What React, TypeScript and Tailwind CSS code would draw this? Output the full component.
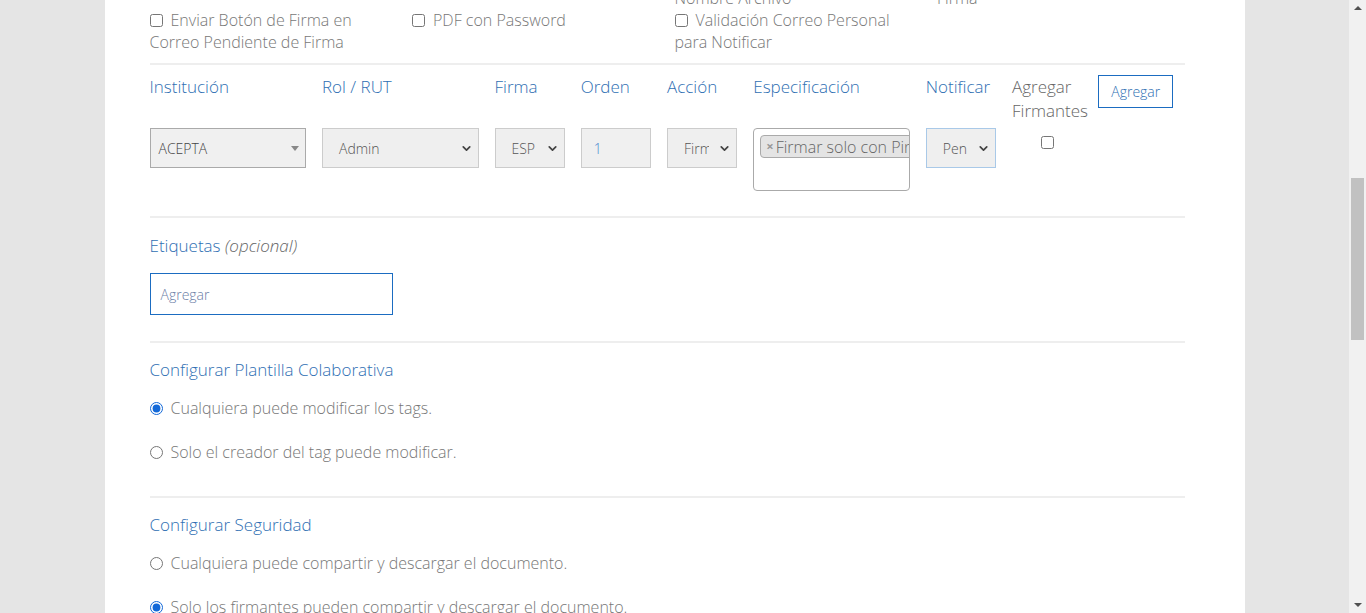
import { ChevronDown } from "lucide-react";

const Select = ({ text, className }: { text: string; className?: string }) => {
  return (
    <div
      className={`flex h-[40px] items-center overflow-hidden border bg-[#efefef] text-[14px] text-[#555] ${className ?? ""}`}
    >
      <span className="mr-[9px] flex-1 overflow-hidden whitespace-nowrap pl-[16px]">{text}</span>
      <ChevronDown size={13} strokeWidth={3.2} className="mr-[5px] shrink-0 text-[#444]" />
    </div>
  );
};

const Radio = ({ label, checked }: { label: string; checked?: boolean }) => {
  return (
    <label className="flex h-[44px] items-center">
      <input
        type="radio"
        defaultChecked={checked}
        className="mr-[8px] h-[13px] w-[13px] accent-[#1268d8]"
      />
      <span>{label}</span>
    </label>
  );
};

const App = () => {
  return (
    <div
      className="flex h-[613px] w-full overflow-hidden bg-[#e5e5e5] text-[16px] font-light text-[#777]"
      style={{ fontFamily: '"Open Sans", "Noto Sans", sans-serif' }}
    >
      <div className="flex flex-1 justify-center">
        <div className="h-full w-[1140px] overflow-hidden bg-white pl-[45px] pr-[60px]">
          {/* checkboxes de opciones */}
          <div className="-mt-[13px] leading-[22px]">
            <div className="grid grid-cols-[repeat(4,262.5px)]">
              <div></div>
              <div></div>
              <div className="pr-[30px]">Nombre Archivo</div>
              <div className="pr-[30px]">Firma</div>
            </div>
            <div className="grid grid-cols-[repeat(4,262.5px)]">
              <label className="pr-[30px]">
                <input type="checkbox" className="mr-[8px] h-[13px] w-[13px] align-[-1px]" />
                Enviar Botón de Firma en Correo Pendiente de Firma
              </label>
              <label className="pr-[30px]">
                <input type="checkbox" className="mr-[8px] h-[13px] w-[13px] align-[-1px]" />
                PDF con Password
              </label>
              <label className="pr-[30px]">
                <input type="checkbox" className="mr-[8px] h-[13px] w-[13px] align-[-1px]" />
                Validación Correo Personal para Notificar
              </label>
              <div></div>
            </div>
          </div>

          <div className="mt-[10px] h-[2px] bg-[#eeeeee]"></div>

          {/* firmantes */}
          <div className="mt-[10px] grid grid-cols-12 text-[17px] leading-[24px] text-[#2f6fb3]">
            <div className="col-span-2 pr-[16px]">Institución</div>
            <div className="col-span-2 pr-[16px]">Rol / RUT</div>
            <div className="col-span-1 pr-[16px]">Firma</div>
            <div className="col-span-1 pr-[16px]">Orden</div>
            <div className="col-span-1 pr-[16px]">Acción</div>
            <div className="col-span-2 pr-[16px]">Especificación</div>
            <div className="col-span-1 whitespace-nowrap pr-[4px]">Notificar</div>
            <div className="col-span-1 pr-[4px] text-[#666]">Agregar Firmantes</div>
            <div className="col-span-1">
              <button className="h-[33px] whitespace-nowrap border border-[#1b6cc1] px-[12px] text-[14px] text-[#2f6fb3]">
                Agregar
              </button>
            </div>
          </div>

          <div className="mt-[5px] grid grid-cols-12 items-start">
            <div className="col-span-2 pr-[16px]">
              <div className="flex h-[40px] items-center border border-[#aaa] bg-[#f0f0f0] text-[14px] text-[#444]">
                <span className="flex-1 pl-[8px]">ACEPTA</span>
                <span className="mr-[6px] h-0 w-0 border-x-[4px] border-t-[5px] border-x-transparent border-t-[#888]"></span>
              </div>
            </div>
            <div className="col-span-2 pr-[16px]">
              <Select text="Admin" className="border-[#cccccc]" />
            </div>
            <div className="col-span-1 pr-[16px]">
              <Select text="ESP" className="border-[#cccccc]" />
            </div>
            <div className="col-span-1 pr-[16px]">
              <div className="flex h-[40px] items-center border border-[#cccccc] bg-[#f0f0f0] pl-[12px] text-[14px] text-[#4a86cf]">
                1
              </div>
            </div>
            <div className="col-span-1 pr-[16px]">
              <Select text="Firmar" className="border-[#cccccc]" />
            </div>
            <div className="col-span-2 pr-[16px]">
              <div className="h-[63px] overflow-hidden rounded-[4px] border border-[#aaa] bg-white pl-[6px] pt-[6px]">
                <div className="flex h-[23px] w-[180px] items-center whitespace-nowrap rounded-[4px] border border-[#aaa] bg-[#e4e4e4] pl-[5px] text-[#666]">
                  <span className="mr-[2px] text-[13px] font-bold text-[#999]">×</span>
                  Firmar solo con Pin
                </div>
              </div>
            </div>
            <div className="col-span-1 pr-[16px]">
              <Select text="Pen" className="border-[#a9c9e8]" />
            </div>
            <div className="col-span-1 flex justify-center pr-[16px] pt-[8px]">
              <input type="checkbox" className="h-[13px] w-[13px]" />
            </div>
            <div className="col-span-1"></div>
          </div>

          <div className="mt-[25px] h-[2px] bg-[#eeeeee]"></div>

          {/* etiquetas */}
          <div className="mt-[16px] text-[17px] leading-[24px] text-[#2f6fb3]">
            Etiquetas <span className="italic text-[#666]">(opcional)</span>
          </div>
          <div className="mt-[15px] flex h-[42px] w-[243px] items-center border border-[#1b6cc1] pl-[10px] text-[14px] text-[#6b7ea6]">
            Agregar
          </div>

          <div className="mt-[26px] h-[2px] bg-[#eeeeee]"></div>

          {/* plantilla colaborativa */}
          <div className="mt-[15px] text-[17px] leading-[24px] text-[#2f6fb3]">Configurar Plantilla Colaborativa</div>
          <div className="mt-[4px]">
            <Radio label="Cualquiera puede modificar los tags." checked />
            <Radio label="Solo el creador del tag puede modificar." />
          </div>

          <div className="mt-[22px] h-[2px] bg-[#eeeeee]"></div>

          {/* seguridad */}
          <div className="mt-[15px] text-[17px] leading-[24px] text-[#2f6fb3]">Configurar Seguridad</div>
          <div className="mt-[4px]">
            <Radio label="Cualquiera puede compartir y descargar el documento." />
            <Radio label="Solo los firmantes pueden compartir y descargar el documento." checked />
          </div>
        </div>
      </div>

      {/* barra de scroll */}
      <div className="flex h-full w-[17px] shrink-0 flex-col items-center bg-[#f1f1f1]">
        <div className="mt-[6px] h-0 w-0 border-x-[4px] border-b-[4px] border-x-transparent border-b-[#505050]"></div>
        <div className="mt-[168px] h-[162px] w-[13px] bg-[#c1c1c1]"></div>
        <div className="flex-1"></div>
        <div className="mb-[6px] h-0 w-0 border-x-[4px] border-t-[4px] border-x-transparent border-t-[#505050]"></div>
      </div>
    </div>
  );
};

export default App;
